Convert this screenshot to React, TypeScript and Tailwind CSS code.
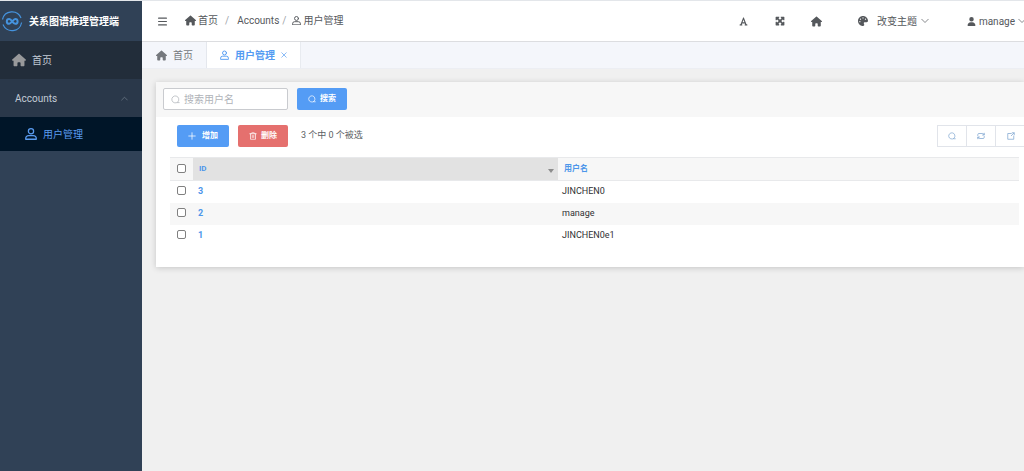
import React from 'react';
import { FaHouse, FaFont, FaPalette, FaUser, FaMaximize } from 'react-icons/fa6';

interface IconProps {
  className?: string;
}

const rows = [
  { id: 3, name: 'JINCHEN0' },
  { id: 2, name: 'manage' },
  { id: 1, name: 'JINCHEN0e1' },
];

function Icon({ className, children }: IconProps & { children: React.ReactNode }) {
  return (
    <svg viewBox="0 0 16 16" fill="none" stroke="currentColor" strokeWidth="1.4" strokeLinecap="round" strokeLinejoin="round" aria-hidden="true" className={className}>
      {children}
    </svg>
  );
}

function UserIcon({ className }: IconProps) {
  return (
    <Icon className={className}>
      <circle cx="8" cy="4.4" r="3.5" strokeWidth="1.7" />
      <path d="M1 15v-1.200a3.700 3.700 0 0 1 3.700-3.700h6.600a3.700 3.700 0 0 1 3.700 3.700V15z" strokeWidth="1.7" />
    </Icon>
  );
}

function SearchIcon({ className }: IconProps) {
  return (
    <Icon className={className}>
      <path d="M11.500 13a6.300 6.300 0 1 1 1.300-1.300M11.500 13.500h3" />
    </Icon>
  );
}

function ChevronIcon({ className }: IconProps) {
  return (
    <Icon className={className}>
      <path d="M1.500 4.500 8 11l6.500-6.500" />
    </Icon>
  );
}

function Logo() {
  return (
    <svg viewBox="0 0 22 22" fill="none" stroke="#4593de" aria-hidden="true" className="h-[22px] w-[22px] shrink-0">
      <path d="M1.500 9.500A9.700 9.700 0 0 1 20 8M20.600 12.500A9.700 9.700 0 0 1 2 14.500" strokeWidth="1.200" />
      <path d="M11.200 11.400C10 9.700 9.200 9 8.200 9a2.400 2.400 0 0 0 0 4.800C10 13.800 12.400 9 14.200 9a2.400 2.400 0 0 1 0 4.800c-1 0-1.800-.7-3-2.400z" strokeWidth="2" />
    </svg>
  );
}

function Checkbox({ label }: { label: string }) {
  return (
    <input
      type="checkbox"
      aria-label={label}
      className="mx-auto block h-[9px] w-[9px] appearance-none rounded-[2px] border border-[#808080] bg-white checked:bg-[#409eff]"
    />
  );
}

function Sidebar() {
  return (
    <aside className="w-[142px] shrink-0 bg-[#304156] text-[10px] text-[#c3cbd6]">
      <div className="flex h-10 items-center gap-1.5 pl-px font-bold text-white">
        <Logo />
        <span className="whitespace-nowrap">关系图谱推理管理端</span>
      </div>
      <nav>
        <a href="#home" className="flex h-[38px] items-center gap-1.5 bg-[#222d3a] pl-3">
          <FaHouse className="h-[14px] w-[14px] text-[#98999b]" />
          <span>首页</span>
        </a>
        <button type="button" className="flex h-[38px] w-full items-center justify-between bg-[#2a384a] pr-[14px] pl-[15px]">
          <span>Accounts</span>
          <ChevronIcon className="h-[7px] w-[7px] rotate-180 text-[#7e8a98]" />
        </button>
        <a href="#users" className="flex h-[34px] items-center gap-1.5 bg-[#001528] pl-[25px] text-[#5a9cf0]">
          <UserIcon className="h-3 w-3" />
          <span>用户管理</span>
        </a>
      </nav>
    </aside>
  );
}

function Header() {
  return (
    <header className="flex h-[41px] items-center border-b border-[#dcdde0] bg-white pl-4 text-[10px] text-[#55585c]">
      <button type="button" aria-label="Menu" className="mr-[18px]">
        <Icon className="h-[9px] w-[9px]">
          <path d="M1 2h14M1 8h14M1 14h14" strokeWidth="2" />
        </Icon>
      </button>
      <nav className="flex items-center whitespace-nowrap pb-0.5">
        <a href="#home" className="flex items-center gap-0.5">
          <FaHouse className="h-[11px] w-[11px]" />
          首页
        </a>
        <span className="mr-2 ml-[7px] text-[#a0a4aa]">/</span>
        <a href="#accounts">Accounts</a>
        <span className="mr-1.5 ml-[3px] text-[#a0a4aa]">/</span>
        <a href="#users" className="flex items-center gap-0.5">
          <UserIcon className="h-[9px] w-[9px]" />
          用户管理
        </a>
      </nav>
      <div className="ml-auto flex items-center whitespace-nowrap">
        <button type="button" aria-label="Font size" className="mr-[27px]"><FaFont className="h-[9px] w-[9px]" /></button>
        <button type="button" aria-label="Full screen" className="mr-[26px]"><FaMaximize className="h-[10px] w-[10px]" /></button>
        <button type="button" aria-label="Home" className="mr-9"><FaHouse className="h-[11px] w-[11px]" /></button>
        <button type="button" className="mr-[38px] flex items-center">
          <FaPalette className="mr-[9px] h-[10px] w-[10px]" />
          改变主题
          <ChevronIcon className="ml-1 h-2 w-2" />
        </button>
        <button type="button" className="-mr-0.5 flex items-center">
          <FaUser className="mr-[3px] h-[9px] w-[9px]" />
          manage
          <ChevronIcon className="ml-[3px] h-2 w-2" />
        </button>
      </div>
    </header>
  );
}

function Tabs() {
  return (
    <div className="flex h-[27px] border-b border-[#eceef3] bg-[#f4f6fb] text-[10px] text-[#75787d]">
      <a href="#home" className="flex items-center gap-1.5 border-r border-[#e4e7ed] pr-[13px] pl-3.5">
        <FaHouse className="h-[11px] w-[11px]" />
        首页
      </a>
      <div className="flex items-center border-r border-[#e8ebf0] bg-white px-[13px] text-[#539bf2]">
        <a href="#users" className="flex items-center gap-1.5 font-bold">
          <UserIcon className="h-[10px] w-[9px]" />
          用户管理
        </a>
        <button type="button" aria-label="Close" className="ml-1.5">
          <Icon className="h-[6px] w-[6px]">
            <path d="M2 2l12 12M14 2 2 14" strokeWidth="1.800" />
          </Icon>
        </button>
      </div>
    </div>
  );
}

function Toolbar() {
  return (
    <div className="flex h-[38px] items-center pl-[21px] text-[9px]">
      <button type="button" className="flex h-[22px] items-center gap-1.5 rounded-[2px] bg-[#549cf5] px-[11px] text-[8px] font-bold text-white">
        <Icon className="h-2 w-2">
          <path d="M8 1.500v13M1.500 8h13" strokeWidth="1.500" />
        </Icon>
        增加
      </button>
      <button type="button" className="ml-[9px] flex h-[22px] items-center gap-1 rounded-[2px] bg-[#e5706e] px-[11px] text-[8px] font-bold text-white">
        <Icon className="h-2 w-2">
          <path d="M1.500 3.500h13M5.500 3.500v-2h5v2M3 3.500v11h10v-11M6.500 7v4M9.500 7v4" strokeWidth="1.400" />
        </Icon>
        删除
      </button>
      <span className="ml-[13px] text-[#5c5f64]">3 个中 0 个被选</span>
      <div className="ml-auto flex divide-x divide-[#e1e4ea] border border-[#e1e4ea] text-[#7fa6d0]">
        <button type="button" aria-label="Search" className="flex h-5 w-[29px] items-center justify-center">
          <SearchIcon className="h-2 w-2" />
        </button>
        <button type="button" aria-label="Refresh" className="flex h-5 w-[29px] items-center justify-center">
          <Icon className="h-2 w-2">
            <path d="M1.500 7V5.500a2.500 2.500 0 0 1 2.500-2.500h7.500a2.500 2.500 0 0 1 2.500 2.500M14.500 2.500v3.500H11M14.500 9v1.500a2.500 2.500 0 0 1-2.500 2.500H4.500A2.500 2.500 0 0 1 2 10.500M1.500 13.500V10H5" strokeWidth="1.500" />
          </Icon>
        </button>
        <button type="button" aria-label="Export" className="flex h-5 w-[29px] items-center justify-center">
          <Icon className="h-2 w-2">
            <path d="M8.500 3H1.500v11.500h12V8M8.500 7.500 14 2M10.500 1.500h4v4" strokeWidth="1.500" />
          </Icon>
        </button>
      </div>
    </div>
  );
}

function UserTable() {
  return (
    <table className="w-full table-fixed border-collapse text-left text-[9px] text-[#303133]">
      <thead>
        <tr className="h-[23px] border-y border-[#e8e9eb] bg-[#f7f7f7] text-[8px] text-[#4d96ea]">
          <th className="w-[23px] p-0 pb-0.5"><Checkbox label="Select all" /></th>
          <th className="w-[43%] bg-[#e2e2e2] py-0 pr-1 pl-1.5 font-bold">
            <button type="button" className="flex w-full items-center justify-between">
              ID
              <svg viewBox="0 0 6 4" aria-hidden="true" className="mt-1 h-1 w-1.5">
                <path d="M0 0h6L3 4z" fill="#8d8d8d" />
              </svg>
            </button>
          </th>
          <th className="py-0 pr-0 pl-1.5 font-bold">用户名</th>
        </tr>
      </thead>
      <tbody>
        {rows.map((row) => (
          <tr key={row.id} className="h-[22px] even:bg-[#f7f7f7]">
            <td className="p-0 pb-0.5"><Checkbox label={`Select ${row.name}`} /></td>
            <td className="py-0 pr-0 pl-[5px]"><a href={`#user-${row.id}`} className="font-bold text-[#4d96ea]">{row.id}</a></td>
            <td className="py-0 pr-0 pl-1">{row.name}</td>
          </tr>
        ))}
      </tbody>
    </table>
  );
}

export default function App() {
  return (
    <div className="flex min-h-screen overflow-hidden border-t border-[#e3e6ea] bg-[#f0f0f0] font-[Roboto,'Noto_Sans_CJK_SC',sans-serif]">
      <Sidebar />
      <div className="min-w-0 flex-1 overflow-hidden">
        <Header />
        <Tabs />
        <main className="pt-[13px] pl-3.5">
          <section className="bg-white pb-5 shadow-[0_1px_6px_rgba(0,0,0,0.18)]">
            <form className="flex h-[35px] items-center bg-[#f7f7f7] pb-px pl-[7px]" onSubmit={(e) => e.preventDefault()}>
              <label className="flex h-[22px] w-[125px] items-center gap-1 rounded-[2px] border border-[#c9cbcf] bg-white pl-[7px] text-[#b4b7bd]">
                <SearchIcon className="h-[9px] w-[9px] shrink-0" />
                <input type="text" aria-label="搜索用户名" placeholder="搜索用户名" className="w-full min-w-0 bg-transparent text-[10px] text-[#606266] outline-none placeholder:text-[#b0b3b9]" />
              </label>
              <button type="submit" className="ml-[9px] flex h-[22px] items-center gap-1 rounded-[2px] bg-[#549cf5] px-[11px] text-[8px] font-bold text-white">
                <SearchIcon className="h-2 w-2" />
                搜索
              </button>
            </form>
            <div className="-mr-[2px] pb-0.5">
              <Toolbar />
            </div>
            <div className="pr-[5px] pl-3.5">
              <UserTable />
            </div>
          </section>
        </main>
      </div>
    </div>
  );
}
